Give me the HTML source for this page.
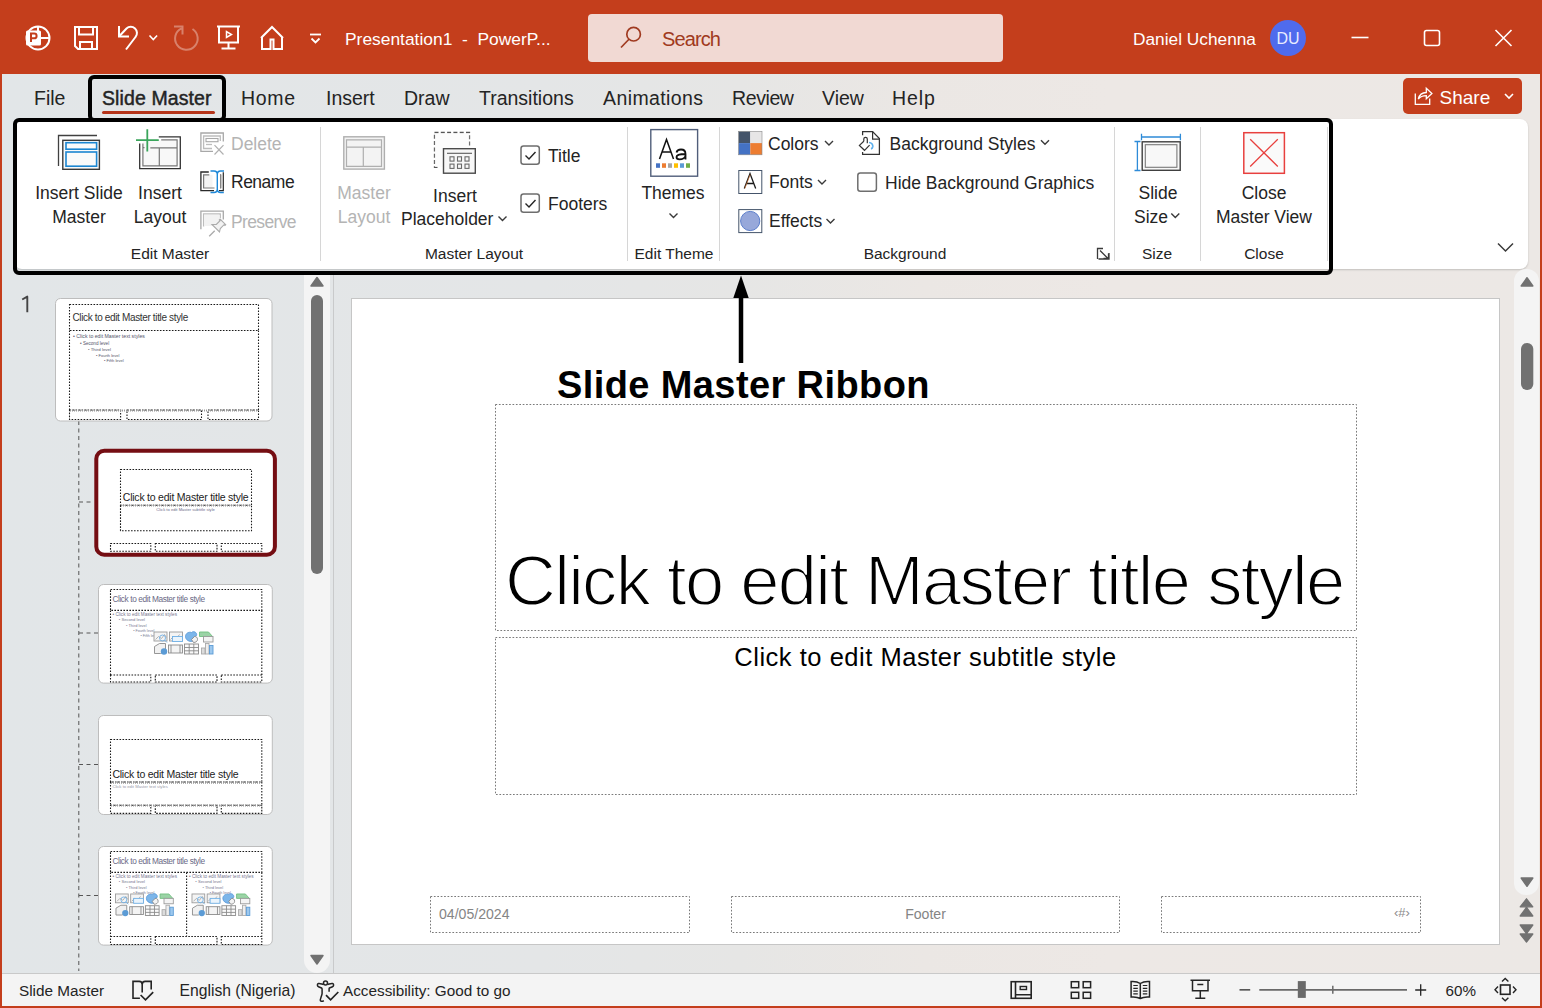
<!DOCTYPE html>
<html><head><meta charset="utf-8">
<style>
*{margin:0;padding:0;box-sizing:border-box}
html,body{width:1542px;height:1008px;overflow:hidden;font-family:"Liberation Sans",sans-serif;background:#C43E1C}
.a{position:absolute}
.t{position:absolute;white-space:nowrap;line-height:1}
#title{left:0;top:0;width:1542px;height:74px;background:#C43E1C}
#main{left:2px;top:74px;width:1538px;height:932px;background:linear-gradient(90deg,#E2E6E8 0%,#E4E6E7 35%,#E6E6E5 48%,#EBE7E4 60%,#EDE8E5 72%,#ECE8E5 100%)}
.tab{font-size:19.5px;color:#242424;top:89px}
#ribbon{left:14px;top:119px;width:1514px;height:150px;background:#fff;border-radius:8px;box-shadow:0 1px 2px rgba(0,0,0,.18)}
.rl{font-size:17.5px;color:#242424}
.gl{font-size:15.5px;color:#242424;top:246px}
.dis{color:#B4B4B4}
.sep{width:1px;background:#D6D6D6;top:127px;height:134px}
#status{left:2px;top:973px;width:1538px;height:33px;background:#F4F4F4;border-top:1px solid #C9C9C9}
.st{font-size:16px;color:#242424;top:983px}
</style></head><body>
<div id="title" class="a">
<svg class="a" style="left:0;top:0" width="420" height="74" viewBox="0 0 420 74" fill="none" stroke="#fff" stroke-width="2">
 <!-- PPT logo -->
 <circle cx="38" cy="38" r="11.5" stroke-width="2"/>
 <path d="M38 27v11h11.5"/>
 <rect x="26" y="30.5" width="15" height="15" rx="1.5" fill="#fff" stroke="none"/>
 <path d="M31 42v-8.5h3.2a2.4 2.4 0 0 1 0 4.8H31" stroke="#C43E1C" stroke-width="2"/>
 <!-- save -->
 <path d="M75 27h22v22H78l-3-3z"/>
 <path d="M79 27v7.5h14V27"/>
 <path d="M80 49v-7h12v7"/>
 <!-- undo -->
 <path d="M119 26v10.5h10"/>
 <path d="M119.5 36l7-7.5a6.2 6.2 0 0 1 9 8.5L126 49.5"/>
 <path d="M149.5 35.5l3.8 4 3.8-4" stroke-width="1.6"/>
 <!-- redo faded -->
 <g stroke="#fff" stroke-opacity=".35">
 <path d="M174 26.6h8.5v8"/>
 <path d="M181.5 28.3A11.3 11.3 0 1 0 192.5 29"/>
 </g>
 <!-- present -->
 <path d="M217 26.5h23"/>
 <path d="M219 27v15.5h19V27"/>
 <path d="M228.5 42.5v6.5"/>
 <path d="M221.5 48.5h14"/>
 <path d="M226.5 31.5v6l5-3z" stroke-width="1.5"/>
 <!-- home -->
 <path d="M261 38l11-11 11 11"/>
 <path d="M262 37v12h8.5v-9.5h3v9.5H282V37"/>
 <!-- customize -->
 <path d="M310 34.5h11" stroke-width="1.8"/>
 <path d="M311.5 38.5l4 4 4-4" stroke-width="1.8"/>
</svg>
<div class="t" style="left:345px;top:30.5px;font-size:17.4px;color:#fff">Presentation1&nbsp; -&nbsp; PowerP...</div>
<div class="a" style="left:588px;top:14px;width:415px;height:48px;background:#F1D9D3;border-radius:4px"></div>
<svg class="a" style="left:616px;top:24px" width="30" height="30" viewBox="0 0 30 30" fill="none" stroke="#A03A20" stroke-width="1.7"><circle cx="17.6" cy="10.2" r="6.8"/><path d="M13.2 15L5 23.5"/></svg>
<div class="t" style="left:662px;top:29.3px;font-size:20px;letter-spacing:-0.9px;color:#A03A20">Search</div>
<div class="t" style="left:1133px;top:31px;font-size:17.3px;color:#fff">Daniel Uchenna</div>
<div class="a" style="left:1270px;top:20px;width:36px;height:36px;border-radius:50%;background:#4F6BED"></div>
<div class="t" style="left:1270px;top:30.5px;width:36px;text-align:center;font-size:16px;color:#E8ECFF">DU</div>
<svg class="a" style="left:1340px;top:20px" width="190" height="36" viewBox="1340 20 190 36" fill="none" stroke="#fff" stroke-width="1.6">
 <path d="M1351.5 37.5h17"/>
 <rect x="1424.5" y="30.5" width="15" height="15" rx="2"/>
 <path d="M1495.5 30l16 16M1511.5 30l-16 16"/>
</svg>
</div>
<div id="main" class="a"></div>
<div class="t tab" style="left:34px">File</div>
<div class="t tab" style="left:102px;color:#242424;letter-spacing:0.1px;-webkit-text-stroke:0.45px #242424">Slide Master</div>
<div class="a" style="left:102px;top:111px;width:113px;height:3px;background:#B5341A;border-radius:2px"></div>
<div class="a" style="left:88px;top:75px;width:138px;height:47px;border:4px solid #000;border-radius:6px"></div>
<div class="t tab" style="left:241px;letter-spacing:0.7px">Home</div>
<div class="t tab" style="left:326px">Insert</div>
<div class="t tab" style="left:404px">Draw</div>
<div class="t tab" style="left:479px">Transitions</div>
<div class="t tab" style="left:603px;letter-spacing:0.4px">Animations</div>
<div class="t tab" style="left:732px;letter-spacing:-0.4px">Review</div>
<div class="t tab" style="left:822px">View</div>
<div class="t tab" style="left:892px;letter-spacing:0.9px">Help</div>
<div class="a" style="left:1403px;top:78px;width:119px;height:36px;background:#C43E1C;border-radius:5px"></div>
<svg class="a" style="left:1400px;top:76px" width="40" height="40" viewBox="1400 76 40 40" fill="none" stroke="#fff" stroke-width="1.3"><path d="M1415.3 93.5V104.3H1429.7V98.5"/><path d="M1418.3 99c1-4 4-6.5 8-6.5V88.3l5.6 5.2-5.6 5.2V95.6c-3.5 0-6 1-8 3.4z"/></svg>
<div class="t" style="left:1439.5px;top:88.3px;font-size:19px;color:#fff">Share</div>
<svg class="a" style="left:1502px;top:90px" width="14" height="12" viewBox="0 0 14 12" fill="none" stroke="#fff" stroke-width="1.6"><path d="M3 4l4 4 4-4"/></svg>
<div id="ribbon" class="a"></div>
<!-- Edit Master group -->
<svg class="a" style="left:0;top:0" width="1542" height="280" viewBox="0 0 1542 280" fill="none">
 <!-- insert slide master -->
 <path d="M58.5 166V135.5H97" stroke="#404040" stroke-width="1.3"/>
 <rect x="62.8" y="140.3" width="36.6" height="29" fill="#FAFAFA" stroke="#3A3A3A" stroke-width="1.4"/>
 <rect x="66" y="142.7" width="30.6" height="6.5" stroke="#1C86D1" stroke-width="1.6"/>
 <rect x="66" y="152" width="30.6" height="14.2" stroke="#1C86D1" stroke-width="1.6"/>
 <!-- insert layout -->
 <rect x="143" y="140" width="34" height="25.8" fill="#F8F8F8"/>
 <path d="M158.8 136.9H180.3V168.6H139.7V143.6" stroke="#333" stroke-width="1.3"/>
 <path d="M161.2 139.9H177.1V165.9H142.9V143.6M150.3 147.8H177.1M159.3 147.8V165.9M142.9 147.6H144.5" stroke="#777" stroke-width="1.2"/>
 <path d="M147.3 129.2V151.6M136 140.2H158.8" stroke="#3AA55B" stroke-width="1.8"/>
 <!-- delete (disabled) -->
 <g stroke-width="1.3" fill="none">
  <path d="M213 151.3H200.9V133H223.3V141.5" stroke="#A8A8A8"/>
  <path d="M212 148.5H203.6V136H220.3V141" stroke="#BDBDBD"/>
  <rect x="206" y="138.5" width="12" height="3.2" stroke="#A8A8A8" stroke-width="1.1"/>
  <path d="M206 144.5H212" stroke="#BDBDBD"/>
  <path d="M214.5 145.2l9 9.3M223.5 145.2l-9 9.3" stroke="#B0B0B0" stroke-width="1.2"/>
 </g>
 <!-- rename -->
 <rect x="203.5" y="174.8" width="9" height="13.5" fill="#F4F4F4"/>
 <path d="M208.8 172H200.9V190.6H214" stroke="#2A2A2A" stroke-width="1.3"/>
 <path d="M209.3 174.8H203.6V188H214.5" stroke="#7A7A7A" stroke-width="1.2"/>
 <path d="M223.3 172.3V190.6H219M220.6 174.5V188.2" stroke="#2A2A2A" stroke-width="1.2"/>
 <path d="M220.6 174.5V188.2" stroke="#8A8A8A" stroke-width="1.1"/>
 <path d="M210.5 171h3.5c2.5 0 3.3 1.5 3.3 3.5v14.5c0 2 .8 3.5 3.3 3.5h3.2M224 171h-3.5c-2.5 0-3.2 1.5-3.2 3.5v14.5c0 2-.8 3.5-3.3 3.5h-3.5" stroke="#1E88D8" stroke-width="1.4"/>
 <!-- preserve disabled -->
 <g stroke-width="1.3" fill="none">
  <path d="M200.9 229.2V211.2H223.3V219.5" stroke="#A8A8A8"/>
  <path d="M203.6 226.5V214H220.3V218" stroke="#BDBDBD"/>
  <rect x="204" y="214.5" width="15.5" height="11.5" fill="#F2F2F2" stroke="none"/>
  <path d="M209.2 236.3l5.5-5.5" stroke="#ABABAB"/>
  <path d="M212 224.5l7.5 7.5 .8-3.5 3.8-3.8.8.8.8-.8-5.6-5.6-.8.8.8.8-3.8 3.8z" fill="#F2F2F2" stroke="#ABABAB" stroke-width="1.1"/>
 </g>
 <!-- master layout disabled -->
 <rect x="343.8" y="136.8" width="40.6" height="32.3" fill="#F3F3F3" stroke="#AFAFAF" stroke-width="1.4"/>
 <path d="M346.5 139.8H381.5V166.3H346.5ZM346.5 147.2H381.5M363.3 147.2V166.3" stroke="#AFAFAF" stroke-width="1.2"/>
 <!-- insert placeholder -->
 <path d="M437.5 167.3H434.5V132.5H469.5V146" stroke="#555" stroke-width="1.3" stroke-dasharray="4 2.3"/>
 <rect x="434.8" y="133" width="34.5" height="34" fill="#FAFAFA" opacity=".6"/>
 <rect x="443.5" y="148.7" width="31.8" height="24.5" fill="#F7F7F7" stroke="#4A4A4A" stroke-width="1.4"/>
 <path d="M447 153.3H472" stroke="#5A5A5A" stroke-width="1.1"/>
 <g stroke="#6A6A6A" stroke-width="1.1">
  <rect x="450" y="156.8" width="4" height="4.3"/><rect x="457.5" y="156.8" width="4" height="4.3"/><rect x="465" y="156.8" width="4" height="4.3"/>
  <rect x="450" y="164.1" width="4" height="4.3"/><rect x="457.5" y="164.1" width="4" height="4.3"/><rect x="465" y="164.1" width="4" height="4.3"/>
 </g>
 <!-- chevrons -->
 <g stroke="#3A3A3A" stroke-width="1.4">
  <path d="M498.5 216.5l4 4 4-4"/>
  <path d="M669.5 213.5l4 4 4-4"/>
  <path d="M825 141l4 4 4-4"/>
  <path d="M818 180l4 4 4-4"/>
  <path d="M826.5 219l4 4 4-4"/>
  <path d="M1041 140.3l4 4 4-4"/>
  <path d="M1171.3 213.5l4 4 4-4"/>
 </g>
 <!-- checkboxes -->
 <rect x="521" y="146" width="18.3" height="18.3" rx="2.5" stroke="#6E6E6E" stroke-width="1.5"/>
 <path d="M525.5 155.5l3.5 3.5 6.5-7" stroke="#242424" stroke-width="1.4"/>
 <rect x="521" y="194" width="18.3" height="18.3" rx="2.5" stroke="#6E6E6E" stroke-width="1.5"/>
 <path d="M525.5 203.5l3.5 3.5 6.5-7" stroke="#242424" stroke-width="1.4"/>
 <rect x="857.8" y="173" width="18.6" height="18.3" rx="2.5" stroke="#6E6E6E" stroke-width="1.5"/>
 <!-- themes -->
 <rect x="650.8" y="129.6" width="46.8" height="46.6" fill="#fff" stroke="#505E7A" stroke-width="1.4"/>
 <g fill="#4472C4"><rect x="656" y="163.3" width="4" height="4.5"/></g>
 <rect x="662" y="163.3" width="4" height="4.5" fill="#ED7D31"/>
 <rect x="668" y="163.3" width="4" height="4.5" fill="#A5A5A5"/>
 <rect x="674" y="163.3" width="4" height="4.5" fill="#FFC000"/>
 <rect x="680" y="163.3" width="4" height="4.5" fill="#5B9BD5"/>
 <rect x="686" y="163.3" width="4" height="4.5" fill="#70AD47"/>
 <path d="M659.5 159L666.5 139.5L673.5 159M662.5 152H671" stroke="#111" stroke-width="1.5"/>
 <path d="M676.5 152.5c.5-2 2-3 4.5-3 3 0 4.5 1.5 4.5 4.5v5.5M685.5 154c-7 0-9 1-9 3 0 1.5 1 2.3 3 2.3 3 0 6-1.5 6-4" stroke="#111" stroke-width="1.8"/>
 <!-- colors -->
 <rect x="738.6" y="131.4" width="11.7" height="11.7" fill="#44546A"/>
 <rect x="750.3" y="131.4" width="11.7" height="11.7" fill="#E7E6E6"/>
 <rect x="738.6" y="143.1" width="11.7" height="11.7" fill="#4472C4"/>
 <rect x="750.3" y="143.1" width="11.7" height="11.7" fill="#ED7D31"/>
 <rect x="738.6" y="131.4" width="23.4" height="23.4" stroke="#8A8A8A" stroke-width=".6"/>
 <!-- fonts -->
 <rect x="738.8" y="170.5" width="23" height="23" fill="#fff" stroke="#44546A" stroke-width="1"/>
 <path d="M744.3 188.5L750 173.5 755.7 188.5M746.3 183.5H753.7" stroke="#1a1a1a" stroke-width="1.3"/>
 <path d="M744.8 188.5L750.2 174.5" stroke="#ED7D31" stroke-width=".6"/>
 <!-- effects -->
 <rect x="738.8" y="209.6" width="23" height="23" fill="#fff" stroke="#44546A" stroke-width="1"/>
 <circle cx="750.2" cy="221" r="9.6" fill="#97A8DA" stroke="#5D7FCB" stroke-width="1"/>
 <!-- background styles -->
 <path d="M862.6 135.2V131.6H872.6L879.4 138.5V154.3H862.6V152" stroke="#333" stroke-width="1.25"/>
 <path d="M872.6 131.6V139.2H879.4" stroke="#333" stroke-width="1.2"/>
 <path d="M863.8 141.2V138.9c0-1 .8-1.6 1.75-1.6s1.75.6 1.75 1.6V143.3M863.8 141.2L859.4 145.4 864.5 150.3 869.6 145.1" stroke="#333" stroke-width="1.2"/>
 <path d="M869 142.5c2.5 0 4 2 3.8 4.2-.2 1.2-1 2-1.8 2.2" stroke="#5DB0EE" stroke-width="1.7"/>
 <!-- dialog launcher -->
 <path d="M1097.5 259V248.5H1103M1109 253V259H1098.5M1100 250.5l8 8M1108.5 253.5v5h-5" stroke="#3A3A3A" stroke-width="1.3"/>
 <!-- slide size -->
 <path d="M1141.5 137H1180.4M1141.5 133.8V140.2M1180.4 133.8V140.2" stroke="#2E8BD8" stroke-width="1.3"/>
 <path d="M1137.4 141.5V170.5M1134.5 141.5H1140.5M1134.5 170.5H1140.5" stroke="#2E8BD8" stroke-width="1.3"/>
 <rect x="1142.2" y="141.8" width="38" height="28.5" fill="#F8F8F8" stroke="#404040" stroke-width="1.4"/>
 <rect x="1145.3" y="144.7" width="31.6" height="22.6" stroke="#7A7A7A" stroke-width="1.1"/>
 <!-- close master view -->
 <rect x="1243.8" y="132.7" width="40.6" height="40.6" fill="#FAFAFA" stroke="#E8403E" stroke-width="1.5"/>
 <path d="M1250.2 139.2L1277.8 166.5M1277.8 139.2L1250.2 166.5" stroke="#E8403E" stroke-width="1.3"/>
 <!-- collapse chevron -->
 <path d="M1498 243.5l7.5 7.5 7.5-7.5" stroke="#3A3A3A" stroke-width="1.5"/>
</svg>
<div class="a sep" style="left:320px"></div>
<div class="a sep" style="left:627px"></div>
<div class="a sep" style="left:719px"></div>
<div class="a sep" style="left:1114px"></div>
<div class="a sep" style="left:1200px"></div>
<div class="a sep" style="left:1327px"></div>
<div class="t rl" style="left:14px;width:130px;text-align:center;line-height:24px;top:181px">Insert Slide<br>Master</div>
<div class="t rl" style="left:110px;top:181px;width:100px;text-align:center;line-height:24px">Insert<br>Layout</div>
<div class="t rl dis" style="left:231px;top:135.5px">Delete</div>
<div class="t rl" style="left:231px;top:174.3px;letter-spacing:-0.5px">Rename</div>
<div class="t rl dis" style="left:231px;top:213.5px;letter-spacing:-0.65px">Preserve</div>
<div class="t gl" style="left:70px;width:200px;text-align:center">Edit Master</div>
<div class="t rl dis" style="left:314px;top:181px;width:100px;text-align:center;line-height:24px">Master<br>Layout</div>
<div class="t rl" style="left:405px;top:183.5px;width:100px;text-align:center;line-height:24px">Insert</div>
<div class="t rl" style="left:401px;top:210.5px">Placeholder</div>
<div class="t rl" style="left:548px;top:147.6px">Title</div>
<div class="t rl" style="left:548px;top:195.6px">Footers</div>
<div class="t gl" style="left:374px;width:200px;text-align:center">Master Layout</div>
<div class="t rl" style="left:623px;top:185px;width:100px;text-align:center">Themes</div>
<div class="t gl" style="left:624px;width:100px;text-align:center">Edit Theme</div>
<div class="t rl" style="left:768px;top:135.6px">Colors</div>
<div class="t rl" style="left:769px;top:173.6px">Fonts</div>
<div class="t rl" style="left:769px;top:213.3px">Effects</div>
<div class="t rl" style="left:889.5px;top:136.3px">Background Styles</div>
<div class="t rl" style="left:885px;top:175.2px">Hide Background Graphics</div>
<div class="t gl" style="left:805px;width:200px;text-align:center">Background</div>
<div class="t rl" style="left:1108px;top:181px;width:100px;text-align:center;line-height:24px">Slide</div>
<div class="t rl" style="left:1134px;top:209px">Size</div>
<div class="t gl" style="left:1107px;width:100px;text-align:center">Size</div>
<div class="t rl" style="left:1204px;top:181px;width:120px;text-align:center;line-height:24px">Close<br>Master View</div>
<div class="t gl" style="left:1214px;width:100px;text-align:center">Close</div>
<div class="a" style="left:13px;top:118px;width:1320px;height:157px;border:4px solid #000;border-radius:6px"></div>
<!-- left pane -->
<div class="a" style="left:333px;top:275px;width:1px;height:698px;background:#C9CACB"></div>
<div class="a" style="left:304px;top:275px;width:26px;height:698px;background:#F4F4F4;border-radius:0 0 13px 13px"></div>
<svg class="a" style="left:300px;top:270px" width="40" height="705" viewBox="300 270 40 705">
 <path d="M317 277.5l6 8.5h-12z" fill="#717171" stroke="#717171" stroke-width="1.5" stroke-linejoin="round"/>
 <rect x="311" y="295" width="12" height="279" rx="6" fill="#717171"/>
 <path d="M317 964l6-8.5h-12z" fill="#717171" stroke="#717171" stroke-width="1.5" stroke-linejoin="round"/>
</svg>
<svg class="a" style="left:15px;top:290px" width="20" height="26" viewBox="15 290 20 26"><path d="M22.2 299.5L27.3 296.6V312.2" fill="none" stroke="#444" stroke-width="1.9" stroke-linejoin="round"/></svg>
<svg class="a" style="left:70px;top:415px" width="40" height="560" viewBox="70 415 40 560" fill="none" stroke="#555" stroke-width="1" stroke-dasharray="4 3.5">
 <path d="M78.8 421V971"/>
 <path d="M79 502H94M79 633H98M79 764.5H98M79 895.5H98"/>
</svg>
<svg class="a" style="left:0;top:0" width="340" height="975" viewBox="0 0 340 975" font-family="Liberation Sans, sans-serif"><rect x="55.5" y="298.5" width="216.5" height="122.5" rx="5" fill="#fff" stroke="#BDBDBD"/><rect x="69.50" y="304.50" width="189.00" height="26.00" fill="none" stroke="#1a1a1a" stroke-width="1.1" stroke-dasharray="1.6 1.4"/><path d="M258.5 330.5V410.5M69.5 330.5V410.5" fill="none" stroke="#1a1a1a" stroke-width="1.1" stroke-dasharray="1.6 1.4"/><rect x="69.50" y="410.00" width="51.10" height="9.50" fill="none" stroke="#1a1a1a" stroke-width="1.1" stroke-dasharray="1.6 1.4"/><rect x="127.00" y="410.00" width="74.50" height="9.50" fill="none" stroke="#1a1a1a" stroke-width="1.1" stroke-dasharray="1.6 1.4"/><rect x="208.00" y="410.00" width="50.50" height="9.50" fill="none" stroke="#1a1a1a" stroke-width="1.1" stroke-dasharray="1.6 1.4"/><path d="M70 410.5H258" stroke="#9a9a9a" stroke-width="2.2" stroke-dasharray="1 1"/><text x="72.4" y="320.8" font-size="10" letter-spacing="-0.35" fill="#333">Click to edit Master title style</text><text x="73.00" y="338.00" font-size="5.20" fill="#55556a">• Click to edit Master text styles</text><text x="80.00" y="344.50" font-size="4.60" fill="#55556a">• Second level</text><text x="88.00" y="350.50" font-size="4.40" fill="#55556a">• Third level</text><text x="96.00" y="356.50" font-size="4.00" fill="#55556a">• Fourth level</text><text x="104.00" y="361.50" font-size="4.00" fill="#55556a">• Fifth level</text><rect x="96.3" y="450.8" width="178.6" height="103.9" rx="8" fill="#fff" stroke="#750E13" stroke-width="4"/><rect x="120.50" y="469.50" width="131.00" height="35.80" fill="none" stroke="#1a1a1a" stroke-width="1.1" stroke-dasharray="1.6 1.4"/><path d="M120.5 505.3V530.8H251.5V505.3" fill="none" stroke="#1a1a1a" stroke-width="1.1" stroke-dasharray="1.6 1.4"/><path d="M121 505.5H251" stroke="#9a9a9a" stroke-width="2.2" stroke-dasharray="1 1"/><rect x="110.50" y="543.50" width="40.30" height="7.80" fill="none" stroke="#1a1a1a" stroke-width="1.1" stroke-dasharray="1.6 1.4"/><rect x="155.30" y="543.50" width="61.70" height="7.80" fill="none" stroke="#1a1a1a" stroke-width="1.1" stroke-dasharray="1.6 1.4"/><rect x="221.30" y="543.50" width="40.50" height="7.80" fill="none" stroke="#1a1a1a" stroke-width="1.1" stroke-dasharray="1.6 1.4"/><text x="122.8" y="501" font-size="10.5" letter-spacing="-0.23" fill="#222">Click to edit Master title style</text><text x="185.6" y="511" font-size="4.1" text-anchor="middle" fill="#6a6a8a">Click to edit Master subtitle style</text><rect x="98.5" y="584.5" width="173.8" height="98.6" rx="5" fill="#fff" stroke="#BDBDBD"/><rect x="110.50" y="589.50" width="151.30" height="20.90" fill="none" stroke="#1a1a1a" stroke-width="1.1" stroke-dasharray="1.6 1.4"/><path d="M110.5 610.4V674.9M261.8 610.4V674.9" fill="none" stroke="#1a1a1a" stroke-width="1.1" stroke-dasharray="1.6 1.4"/><rect x="110.50" y="675.00" width="40.30" height="7.00" fill="none" stroke="#1a1a1a" stroke-width="1.1" stroke-dasharray="1.6 1.4"/><rect x="155.30" y="675.00" width="61.70" height="7.00" fill="none" stroke="#1a1a1a" stroke-width="1.1" stroke-dasharray="1.6 1.4"/><rect x="221.30" y="675.00" width="40.50" height="7.00" fill="none" stroke="#1a1a1a" stroke-width="1.1" stroke-dasharray="1.6 1.4"/><text x="112.4" y="602.2" font-size="8.3" letter-spacing="-0.4" fill="#6b6a86">Click to edit Master title style</text><text x="112.50" y="615.50" font-size="4.68" fill="#777790">• Click to edit Master text styles</text><text x="118.80" y="621.35" font-size="4.14" fill="#777790">• Second level</text><text x="126.00" y="626.75" font-size="3.96" fill="#777790">• Third level</text><text x="133.20" y="632.15" font-size="3.60" fill="#777790">• Fourth level</text><text x="140.40" y="636.65" font-size="3.60" fill="#777790">• Fifth level</text><g transform="translate(153.5,630.5) scale(1.0)" fill="none" stroke-width="0.9"><rect x="0.5" y="1.5" width="13" height="9" stroke="#9a9a9a" fill="#f4f4f4"/><path d="M2 9l3-3 3 2 3-4 2 3" stroke="#aaa"/><circle cx="9" cy="7.5" r="3" stroke="#6fb0e6"/><path d="M11 9.5l2.5 2.5" stroke="#6fb0e6"/><rect x="16" y="1.5" width="13" height="9" stroke="#9a9a9a" fill="#f4f4f4"/><path d="M17 9l3-3 3 2 3-4" stroke="#aaa"/><rect x="19" y="6" width="10" height="5" stroke="#6fb0e6" fill="#eaf4fc"/><path d="M32 6c0-3 3-5 6-4 2-2 6 0 5 3l-2 1c2 2 0 5-3 5-3 0-6-2-6-5z" fill="#7cb6ea" stroke="#5a9ad8"/><path d="M38 9l3-3c2 0 3 1 3 3s-2 3-4 3z" stroke="#888" fill="#f3f3f3"/><path d="M46 1.5h9l4 4.5h-13z" fill="#9bd3a6" stroke="#6fbf80"/><rect x="50" y="6" width="9.5" height="5.5" stroke="#9a9a9a" fill="#f4f4f4"/><path d="M1 16l5-3h6v8l-5 2H1z" stroke="#8a8a8a" fill="#f1f1f1"/><circle cx="10.5" cy="21" r="3.2" fill="#5b9bd5"/><rect x="15" y="14.5" width="14" height="8" stroke="#8a8a8a" fill="#f4f4f4"/><path d="M17.5 14.5v8M26.5 14.5v8" stroke="#8a8a8a"/><rect x="31" y="13.5" width="14" height="10" stroke="#8a8a8a" fill="#fafafa"/><path d="M31 17h14M31 20.3h14M35.7 13.5v10M40.3 13.5v10" stroke="#8a8a8a"/><rect x="48" y="17.5" width="3.5" height="6" fill="#dcdcdc" stroke="#aaa"/><rect x="52" y="13" width="3.5" height="10.5" fill="#eee" stroke="#aaa"/><rect x="56" y="15" width="3.5" height="8.5" fill="#9dc8ee" stroke="#5b9bd5"/></g><rect x="98.5" y="715.5" width="173.8" height="99" rx="5" fill="#fff" stroke="#BDBDBD"/><rect x="110.50" y="739.50" width="151.30" height="42.50" fill="none" stroke="#1a1a1a" stroke-width="1.1" stroke-dasharray="1.6 1.4"/><path d="M110.5 782V805M261.8 782V805" fill="none" stroke="#1a1a1a" stroke-width="1.1" stroke-dasharray="1.6 1.4"/><path d="M111 782.5H261" stroke="#9a9a9a" stroke-width="2.4" stroke-dasharray="1 1"/><rect x="110.50" y="805.30" width="40.30" height="8.10" fill="none" stroke="#1a1a1a" stroke-width="1.1" stroke-dasharray="1.6 1.4"/><rect x="155.30" y="805.30" width="61.70" height="8.10" fill="none" stroke="#1a1a1a" stroke-width="1.1" stroke-dasharray="1.6 1.4"/><rect x="221.30" y="805.30" width="40.50" height="8.10" fill="none" stroke="#1a1a1a" stroke-width="1.1" stroke-dasharray="1.6 1.4"/><path d="M111 805.5H261" stroke="#9a9a9a" stroke-width="2.2" stroke-dasharray="1 1"/><text x="112.4" y="778" font-size="10.5" letter-spacing="-0.22" fill="#222">Click to edit Master title style</text><text x="112.4" y="787.5" font-size="4.2" fill="#9a9aaa">Click to edit Master text styles</text><rect x="98.5" y="846.5" width="173.8" height="98.6" rx="5" fill="#fff" stroke="#BDBDBD"/><rect x="110.50" y="851.50" width="151.30" height="20.90" fill="none" stroke="#1a1a1a" stroke-width="1.1" stroke-dasharray="1.6 1.4"/><path d="M110.5 872.4V936.3M186.6 872.4V936.3M261.8 872.4V936.3" fill="none" stroke="#1a1a1a" stroke-width="1.1" stroke-dasharray="1.6 1.4"/><rect x="110.50" y="936.50" width="40.30" height="8.00" fill="none" stroke="#1a1a1a" stroke-width="1.1" stroke-dasharray="1.6 1.4"/><rect x="155.30" y="936.50" width="61.70" height="8.00" fill="none" stroke="#1a1a1a" stroke-width="1.1" stroke-dasharray="1.6 1.4"/><rect x="221.30" y="936.50" width="40.50" height="8.00" fill="none" stroke="#1a1a1a" stroke-width="1.1" stroke-dasharray="1.6 1.4"/><text x="112.4" y="864.3" font-size="8.3" letter-spacing="-0.4" fill="#6b6a86">Click to edit Master title style</text><text x="112.50" y="877.50" font-size="4.68" fill="#777790">• Click to edit Master text styles</text><text x="118.80" y="883.35" font-size="4.14" fill="#777790">• Second level</text><text x="126.00" y="888.75" font-size="3.96" fill="#777790">• Third level</text><text x="133.20" y="894.15" font-size="3.60" fill="#777790">• Fourth level</text><text x="189.00" y="877.50" font-size="4.68" fill="#777790">• Click to edit Master text styles</text><text x="195.30" y="883.35" font-size="4.14" fill="#777790">• Second level</text><text x="202.50" y="888.75" font-size="3.96" fill="#777790">• Third level</text><text x="209.70" y="894.15" font-size="3.60" fill="#777790">• Fourth level</text><g transform="translate(115,892.5) scale(0.98)" fill="none" stroke-width="0.9"><rect x="0.5" y="1.5" width="13" height="9" stroke="#9a9a9a" fill="#f4f4f4"/><path d="M2 9l3-3 3 2 3-4 2 3" stroke="#aaa"/><circle cx="9" cy="7.5" r="3" stroke="#6fb0e6"/><path d="M11 9.5l2.5 2.5" stroke="#6fb0e6"/><rect x="16" y="1.5" width="13" height="9" stroke="#9a9a9a" fill="#f4f4f4"/><path d="M17 9l3-3 3 2 3-4" stroke="#aaa"/><rect x="19" y="6" width="10" height="5" stroke="#6fb0e6" fill="#eaf4fc"/><path d="M32 6c0-3 3-5 6-4 2-2 6 0 5 3l-2 1c2 2 0 5-3 5-3 0-6-2-6-5z" fill="#7cb6ea" stroke="#5a9ad8"/><path d="M38 9l3-3c2 0 3 1 3 3s-2 3-4 3z" stroke="#888" fill="#f3f3f3"/><path d="M46 1.5h9l4 4.5h-13z" fill="#9bd3a6" stroke="#6fbf80"/><rect x="50" y="6" width="9.5" height="5.5" stroke="#9a9a9a" fill="#f4f4f4"/><path d="M1 16l5-3h6v8l-5 2H1z" stroke="#8a8a8a" fill="#f1f1f1"/><circle cx="10.5" cy="21" r="3.2" fill="#5b9bd5"/><rect x="15" y="14.5" width="14" height="8" stroke="#8a8a8a" fill="#f4f4f4"/><path d="M17.5 14.5v8M26.5 14.5v8" stroke="#8a8a8a"/><rect x="31" y="13.5" width="14" height="10" stroke="#8a8a8a" fill="#fafafa"/><path d="M31 17h14M31 20.3h14M35.7 13.5v10M40.3 13.5v10" stroke="#8a8a8a"/><rect x="48" y="17.5" width="3.5" height="6" fill="#dcdcdc" stroke="#aaa"/><rect x="52" y="13" width="3.5" height="10.5" fill="#eee" stroke="#aaa"/><rect x="56" y="15" width="3.5" height="8.5" fill="#9dc8ee" stroke="#5b9bd5"/></g><g transform="translate(191.5,892.5) scale(0.98)" fill="none" stroke-width="0.9"><rect x="0.5" y="1.5" width="13" height="9" stroke="#9a9a9a" fill="#f4f4f4"/><path d="M2 9l3-3 3 2 3-4 2 3" stroke="#aaa"/><circle cx="9" cy="7.5" r="3" stroke="#6fb0e6"/><path d="M11 9.5l2.5 2.5" stroke="#6fb0e6"/><rect x="16" y="1.5" width="13" height="9" stroke="#9a9a9a" fill="#f4f4f4"/><path d="M17 9l3-3 3 2 3-4" stroke="#aaa"/><rect x="19" y="6" width="10" height="5" stroke="#6fb0e6" fill="#eaf4fc"/><path d="M32 6c0-3 3-5 6-4 2-2 6 0 5 3l-2 1c2 2 0 5-3 5-3 0-6-2-6-5z" fill="#7cb6ea" stroke="#5a9ad8"/><path d="M38 9l3-3c2 0 3 1 3 3s-2 3-4 3z" stroke="#888" fill="#f3f3f3"/><path d="M46 1.5h9l4 4.5h-13z" fill="#9bd3a6" stroke="#6fbf80"/><rect x="50" y="6" width="9.5" height="5.5" stroke="#9a9a9a" fill="#f4f4f4"/><path d="M1 16l5-3h6v8l-5 2H1z" stroke="#8a8a8a" fill="#f1f1f1"/><circle cx="10.5" cy="21" r="3.2" fill="#5b9bd5"/><rect x="15" y="14.5" width="14" height="8" stroke="#8a8a8a" fill="#f4f4f4"/><path d="M17.5 14.5v8M26.5 14.5v8" stroke="#8a8a8a"/><rect x="31" y="13.5" width="14" height="10" stroke="#8a8a8a" fill="#fafafa"/><path d="M31 17h14M31 20.3h14M35.7 13.5v10M40.3 13.5v10" stroke="#8a8a8a"/><rect x="48" y="17.5" width="3.5" height="6" fill="#dcdcdc" stroke="#aaa"/><rect x="52" y="13" width="3.5" height="10.5" fill="#eee" stroke="#aaa"/><rect x="56" y="15" width="3.5" height="8.5" fill="#9dc8ee" stroke="#5b9bd5"/></g></svg>
<!-- slide area -->
<div class="a" style="left:351px;top:298px;width:1149px;height:647px;background:#fff;border:1px solid #C6C6C6"></div>
<div class="a" style="left:1514px;top:269px;width:25px;height:626px;background:#F4F4F4;border-radius:12px 12px 12px 12px"></div>
<svg class="a" style="left:1510px;top:270px" width="32" height="680" viewBox="1510 270 32 680">
 <path d="M1527 277.8l5.8 8.2h-11.6z" fill="#717171" stroke="#717171" stroke-width="1.5" stroke-linejoin="round"/>
 <rect x="1521" y="343" width="12.3" height="47" rx="6" fill="#717171"/>
 <path d="M1527 886.3l5.8-8.2h-11.6z" fill="#717171" stroke="#717171" stroke-width="1.5" stroke-linejoin="round"/>
 <path d="M1526.5 898.8l6.3 8h-12.6zM1526.5 907.5l6.3 8.5h-12.6z" fill="#717171" stroke="#717171" stroke-width="1.3" stroke-linejoin="round"/>
 <path d="M1526.5 942l6.3-8h-12.6zM1526.5 933.5l6.3-8.5h-12.6z" fill="#717171" stroke="#717171" stroke-width="1.3" stroke-linejoin="round"/>
</svg>
<svg class="a" style="left:0;top:0" width="1542" height="1008" viewBox="0 0 1542 1008" fill="none" stroke="#7A7A7A" stroke-width="1" stroke-dasharray="1.7 1.7">
 <rect x="495.5" y="404.5" width="861" height="226"/>
 <rect x="495.5" y="637.5" width="861" height="157"/>
 <rect x="430.5" y="896.5" width="259" height="36"/>
 <rect x="731.5" y="896.5" width="388" height="36"/>
 <rect x="1161.5" y="896.5" width="259" height="36"/>
</svg>
<div class="t" style="left:505px;top:545.5px;font-size:70.5px;color:#000;letter-spacing:-1.71px;-webkit-text-stroke:1.8px #fff">Click to edit Master title style</div>
<div class="t" style="left:495px;top:644.5px;width:861px;text-align:center;font-size:25.5px;letter-spacing:0.52px;color:#000">Click to edit Master subtitle style</div>
<div class="t" style="left:439px;top:907px;font-size:14.1px;color:#858585">04/05/2024</div>
<div class="t" style="left:731px;top:907px;width:389px;text-align:center;font-size:14.1px;color:#858585">Footer</div>
<div class="t" style="left:1394px;top:906px;font-size:13px;color:#8C8C8C">‹#›</div>
<!-- annotation -->
<svg class="a" style="left:720px;top:270px" width="40" height="100" viewBox="720 270 40 100">
 <path d="M741 296V363" stroke="#000" stroke-width="4.5"/>
 <path d="M741 275.5L748.7 298H733.3z" fill="#000"/>
</svg>
<div class="t" style="left:557px;top:365.7px;font-size:38px;font-weight:bold;letter-spacing:0.4px;color:#000">Slide Master Ribbon</div>
<!-- status bar -->
<div id="status" class="a"></div>
<div class="t st" style="left:19px;font-size:15.3px">Slide Master</div>
<div class="t st" style="left:179.5px;font-size:15.7px">English (Nigeria)</div>
<div class="t st" style="left:343px;font-size:15.3px">Accessibility: Good to go</div>
<div class="t st" style="left:1445.5px;font-size:15.2px">60%</div>
<svg class="a" style="left:0;top:970px" width="1542" height="36" viewBox="0 970 1542 36" fill="none" stroke="#242424" stroke-width="1.5">
 <!-- notes -->
 <path d="M139.9 998.2H133V981.4H139.2C140.8 981.4 142.2 982.6 142.2 984.5V992.6M142.2 984.5C142.2 982.6 143.6 981.4 145.2 981.4H151.2V989.6" stroke-width="1.6"/>
 <path d="M140.6 995l4.9 4.8 7.7-7.6" stroke-width="1.7"/>
 <!-- accessibility -->
 <circle cx="325.5" cy="982.9" r="2" stroke-width="1.5"/>
 <path d="M323.5 984.5c-2-.5-3.5-1.3-5-1-1.5.4-1.5 2.6 0 3.2l3 1.3c.5.3.6.7.6 1.2v4c0 1-.3 1.6-.6 2.6l-1.2 3.8c-.4 1.5 1.5 2.4 3.5 1" stroke-width="1.5"/>
 <path d="M327.5 984.5c2-.5 3.5-1.3 5-1 1.5.4 1.5 2.6 0 3.2l-3 1.3c-.4.2-.4.6-.4 1V991.8" stroke-width="1.5"/>
 <path d="M326 995.2l4.6 4.7 7.7-7.9" stroke-width="1.7"/>
 <!-- normal view -->
 <rect x="1011.2" y="981.7" width="20" height="16.6" stroke-width="1.6"/>
 <path d="M1015.5 981.7v16.6M1015.5 994.8h15.7" stroke-width="1.6"/>
 <rect x="1020.2" y="986.5" width="6.3" height="3" stroke-width="1.4"/>
 <!-- sorter -->
 <rect x="1071.3" y="981.7" width="7.4" height="6" stroke-width="1.5"/><rect x="1083.2" y="981.7" width="7.4" height="6" stroke-width="1.5"/>
 <rect x="1071.3" y="992.3" width="7.4" height="6" stroke-width="1.5"/><rect x="1083.2" y="992.3" width="7.4" height="6" stroke-width="1.5"/>
 <!-- reading -->
 <path d="M1140.3 998.5c-2.5-1.5-6-1.8-9.2-1.5V981.5c3.5-.3 7 .5 9.2 2 2.2-1.5 5.7-2.3 9.2-2V997c-3.2-.3-6.7 0-9.2 1.5zM1140.3 983.5V998" stroke-width="1.5"/>
 <path d="M1133.3 985.5h4.5M1133.3 988.3h4.5M1133.3 991.1h4.5M1133.3 993.9h4.5M1142.8 985.5h4.5M1142.8 988.3h4.5M1142.8 991.1h4.5M1142.8 993.9h4.5" stroke-width="1.2"/>
 <!-- slideshow -->
 <path d="M1190.5 980.3h19.5M1192.5 980.5v10.3h15.5v-10.3M1200.3 990.8v7.5M1195.3 998.2h10M1197.3 984.6h6" stroke-width="1.5"/>
 <!-- zoom -->
 <path d="M1239.5 989.8h10.7M1415.2 990h11M1420.7 984.3v11.4" stroke-width="1.3"/>
 <path d="M1259.3 989.8H1407" stroke="#6a6a6a" stroke-width="1.8"/>
 <path d="M1332.8 985.8v8" stroke="#6a6a6a" stroke-width="1.5"/>
 <rect x="1297.8" y="981.1" width="8" height="16.8" fill="#6a6a6a" stroke="none"/>
 <!-- fit -->
 <rect x="1500.5" y="985" width="9.5" height="9.3" stroke-width="1.6"/>
 <path d="M1502 981.5l3.2-3 3.2 3M1502 997.7l3.2 3 3.2-3M1498 986.5l-3 3.2 3 3.2M1513 986.5l3 3.2-3 3.2" stroke-width="1.4"/>
</svg>

</body></html>
